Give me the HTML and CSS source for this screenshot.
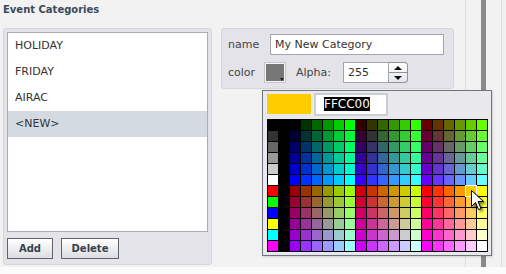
FILE: index.html
```html
<!DOCTYPE html>
<html lang="en">
<head>
    <meta charset="UTF-8">
    <title>Event Categories</title>
    <link rel="stylesheet" href="styles.css">
</head>
<body>
    <div class="page">
        <!-- Main area -->
        <div class="main">
            <h1 class="title">Event Categories</h1>

            <div class="editor">
                <!-- Category list -->
                <div class="list-panel">
                    <ul class="cat-list">
                        <li>HOLIDAY</li>
                        <li>FRIDAY</li>
                        <li>AIRAC</li>
                        <li class="selected">&lt;NEW&gt;</li>
                    </ul>
                    <div class="buttons">
                        <button class="btn btn-add">Add</button>
                        <button class="btn btn-delete">Delete</button>
                    </div>
                </div>

                <!-- Category form -->
                <div class="form-panel">
                    <div class="form-row">
                        <label class="lbl-name">name</label>
                        <input class="name-input" type="text" value="My New Category">
                    </div>
                    <div class="form-row">
                        <label class="lbl-color">color</label>
                        <div class="color-btn"><span class="color-arrow"></span></div>
                        <label class="lbl-alpha">Alpha:</label>
                        <input class="alpha-input" type="text" value="255">
                        <div class="stepper">
                            <span class="step-up"></span>
                            <span class="step-down"></span>
                        </div>
                    </div>
                </div>
            </div>
        </div>

        <!-- Right edge / scrollbar -->
        <div class="divider"><div class="divider-bar"></div></div>
        <div class="side"></div>
    </div>

    <!-- Colour picker popup -->
    <div class="picker">
        <div class="picker-head">
            <div class="picker-swatch"></div>
            <div class="picker-hex"><span class="hex-sel">FFCC00</span></div>
        </div>
        <div class="picker-grid" id="picker-grid"></div>
    </div>

    <!-- Mouse pointer -->
    <svg class="pointer" width="16" height="24" viewBox="0 0 16 24">
        <path d="M1.5 1.5 L1.5 17.5 L5.5 13.5 L8.5 20.5 L11 19.5 L8 12.5 L13.5 12.5 Z"
              fill="#fff" stroke="#000" stroke-width="1" stroke-linejoin="miter"/>
    </svg>

    <script>
        // Monta a paleta web-safe no estilo do color picker do Flash
        var grid = document.getElementById('picker-grid');
        var hex = ['00', '33', '66', '99', 'CC', 'FF'];
        var especiais = ['000000', '333333', '666666', '999999', 'CCCCCC', 'FFFFFF',
                         'FF0000', '00FF00', '0000FF', 'FFFF00', '00FFFF', 'FF00FF'];

        for (var row = 0; row < 12; row++) {
            var cores = [especiais[row], '000000'];
            var metade = row < 6 ? 0 : 3;
            var b = hex[row % 6];
            for (var bloco = 0; bloco < 3; bloco++) {
                var r = hex[metade + bloco];
                for (var g = 0; g < 6; g++) {
                    cores.push(r + hex[g] + b);
                }
            }
            cores.forEach(function(cor) {
                var cell = document.createElement('div');
                cell.className = 'cell';
                cell.style.background = '#' + cor;
                if (row === 6 && cor === 'FFCC00') {
                    cell.className += ' cell-selected';
                }
                grid.appendChild(cell);
            });
        }
    </script>
</body>
</html>
```

FILE: styles.css
```css
/* Layout geral */
body {
    margin: 0;
    padding: 0;
    background-color: #fbfbfb;
    font-family: "DejaVu Sans", Verdana, sans-serif;
    font-size: 11px;
    color: #333;
}

.page {
    display: flex;
    height: 267px;
    background-color: #f2f2f2;
    box-shadow: 0 1px 2px rgba(0, 0, 0, 0.18);
}

.main {
    width: 462px;
    padding: 3px 0 0 3px;
}

.title {
    margin: 0;
    height: 25px;
    font-size: 10px;
    font-weight: bold;
    line-height: 14px;
    color: #3b4a5a;
}

.editor {
    display: flex;
    align-items: flex-start;
    gap: 9px;
}

/* Painel da lista */
.list-panel {
    width: 201px;
    height: 229px;
    padding: 3px;
    background-color: #e3e3e9;
    border: 1px solid #d6d6dc;
    border-radius: 3px;
}

.cat-list {
    list-style: none;
    margin: 0;
    padding: 0;
    height: 198px;
    background-color: #fff;
    border: 1px solid #a9acb3;
}

.cat-list li {
    height: 26px;
    line-height: 26px;
    padding-left: 7px;
    color: #333;
}

.cat-list li.selected {
    background-color: #d3dae2;
}

.buttons {
    display: flex;
    gap: 8px;
    margin-top: 6px;
}

.btn {
    height: 21px;
    padding: 0;
    font-family: "DejaVu Sans", Verdana, sans-serif;
    font-size: 10px;
    font-weight: bold;
    color: #36414f;
    background: linear-gradient(#ffffff, #dcdde0);
    border: 1px solid #5d636b;
}

.btn-add {
    width: 46px;
}

.btn-delete {
    width: 58px;
}

/* Painel do formulário */
.form-panel {
    display: flex;
    flex-direction: column;
    gap: 7px;
    width: 225px;
    padding: 5px 0 5px 6px;
    background-color: #e3e3e9;
    border: 1px solid #d6d6dc;
    border-radius: 3px;
}

.form-row {
    display: flex;
    align-items: center;
    height: 21px;
}

.form-row label {
    color: #444;
}

.lbl-name {
    width: 42px;
}

.lbl-color {
    width: 36px;
}

.lbl-alpha {
    width: 47px;
}

.name-input,
.alpha-input {
    height: 21px;
    box-sizing: border-box;
    padding: 0 4px;
    font-family: "DejaVu Sans", Verdana, sans-serif;
    font-size: 11px;
    color: #333;
    background-color: #fff;
    border: 1px solid #a3a6ad;
    outline: none;
}

.name-input {
    width: 174px;
}

.color-btn {
    position: relative;
    width: 22px;
    height: 21px;
    box-sizing: border-box;
    margin-right: 10px;
    background-color: #777;
    border: 1px solid #c4c6cc;
    box-shadow: inset 0 0 0 1px #f5f5f7;
}

.color-arrow {
    position: absolute;
    right: 1px;
    bottom: 1px;
    border-left: 2px solid transparent;
    border-right: 2px solid transparent;
    border-top: 3px solid #222;
}

.alpha-input {
    width: 46px;
}

.stepper {
    display: flex;
    flex-direction: column;
    width: 19px;
    height: 21px;
    box-sizing: border-box;
    background: linear-gradient(#ffffff, #e6e7ea);
    border: 1px solid #8d9198;
    border-left: none;
    border-radius: 0 4px 4px 0;
}

.step-up,
.step-down {
    flex: 1;
    display: flex;
    align-items: center;
    justify-content: center;
}

.step-up {
    border-bottom: 1px solid #8d9198;
}

.step-up::after {
    content: "";
    border-left: 4px solid transparent;
    border-right: 4px solid transparent;
    border-bottom: 4px solid #111;
}

.step-down::after {
    content: "";
    border-left: 4px solid transparent;
    border-right: 4px solid transparent;
    border-top: 4px solid #111;
}

/* Borda direita */
.divider {
    width: 35px;
    display: flex;
    justify-content: center;
    border-left: 1px solid #dcdcdc;
    border-right: 1px solid #dcdcdc;
}

.divider-bar {
    width: 5px;
    background-color: #8a8a8a;
}

.side {
    flex: 1;
    background-color: #f0f0f0;
}

/* Popup do seletor de cor */
.picker {
    position: absolute;
    left: 262px;
    top: 90px;
    width: 221px;
    padding: 1px 3px 3px 4px;
    background-color: #e9e9ec;
    border: 1px solid #6e747c;
    box-shadow: 1px 1px 2px rgba(0, 0, 0, 0.15);
}

.picker-head {
    display: flex;
    align-items: center;
    gap: 3px;
    height: 24px;
    margin-bottom: 3px;
}

.picker-swatch {
    width: 44px;
    height: 20px;
    background-color: #ffcc00;
}

.picker-hex {
    width: 62px;
    height: 19px;
    padding-left: 8px;
    line-height: 19px;
    font-size: 12px;
    background-color: #fff;
    border: 2px solid #c9cdd4;
}

.hex-sel {
    background-color: #000;
    color: #fff;
}

.picker-grid {
    display: grid;
    grid-template-columns: repeat(20, 10px);
    grid-auto-rows: 10px;
    gap: 1px;
    padding: 1px;
    background-color: #000;
    width: 219px;
}

.cell-selected {
    position: relative;
    outline: 1px solid #fff;
}

/* Cursor do mouse */
.pointer {
    position: absolute;
    left: 470px;
    top: 189px;
    filter: drop-shadow(2px 2px 1px rgba(0, 0, 0, 0.5));
}
```
